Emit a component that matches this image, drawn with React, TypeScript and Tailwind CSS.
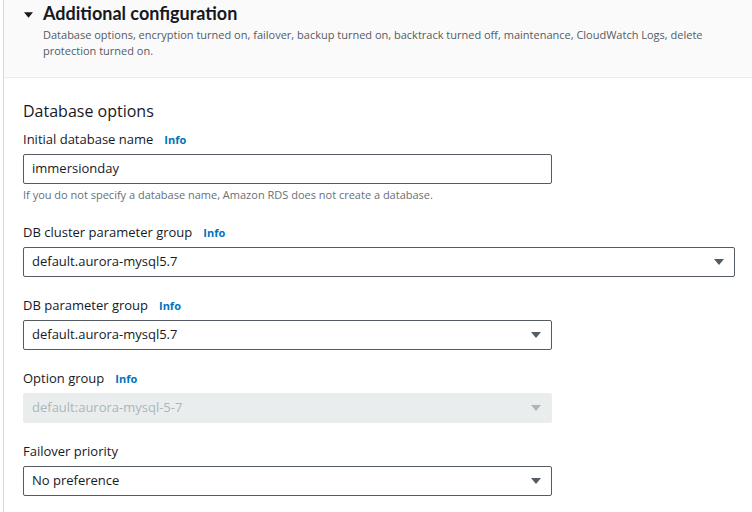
const fields = [
  { label: "DB cluster parameter group", value: "default.aurora-mysql5.7", info: true, wide: true },
  { label: "DB parameter group", value: "default.aurora-mysql5.7", info: true },
  { label: "Option group", value: "default:aurora-mysql-5-7", info: true, disabled: true },
  { label: "Failover priority", value: "No preference" },
];

function Caret({ className }: { className: string }) {
  return (
    <svg viewBox="0 0 10 6" className={className} fill="currentColor">
      <path d="M0 0h10L5 6z" />
    </svg>
  );
}

function Label({ text, info }: { text: string; info?: boolean }) {
  return (
    <div className="flex items-baseline h-[20px] mb-[5px] text-[13px] leading-[20px] text-[#16191f]">
      <span>{text}</span>
      {info && <span className="ml-[11px] text-[11px] font-bold text-[#0073bb]">Info</span>}
    </div>
  );
}

function Select({ value, wide, disabled }: { value: string; wide?: boolean; disabled?: boolean }) {
  return (
    <div
      className={`flex items-center justify-between h-[30px] pl-[8px] pr-[10px] rounded-[2px] text-[13px] ${
        wide ? "w-[712px]" : "w-[529px]"
      } ${
        disabled
          ? "bg-[#eaeded] border border-[#eaeded] text-[#aab7b8]"
          : "bg-white border border-[#545b64] text-[#16191f]"
      }`}
    >
      <span>{value}</span>
      <Caret className={`w-[10px] h-[6px] ${disabled ? "text-[#aab7b8]" : "text-[#545b64]"}`} />
    </div>
  );
}

export default function App() {
  return (
    <div className="min-h-screen bg-white pl-[3px] font-['Open_Sans',sans-serif]">
      <div className="min-h-screen border-l border-[#d5dbdb]">
        {/* Expandable section header */}
        <div className="bg-[#fafafa] border-b border-[#eaeded] pt-[2px] pb-[18px] pl-[19px] pr-[20px]">
          <div className="flex items-center h-[22px]">
            <Caret className="w-[9px] h-[6px] text-[#16191f] ml-[1px] mr-[10px] mt-[3px]" />
            <h2 className="font-['Lato',sans-serif] text-[18px] leading-[22px] font-bold text-[#16191f]">
              Additional configuration
            </h2>
          </div>
          <p className="mt-[3px] pl-[20px] text-[11px] leading-[16px] text-[#545b64]">
            Database options, encryption turned on, failover, backup turned on, backtrack turned off, maintenance,
            CloudWatch Logs, delete protection turned on.
          </p>
        </div>

        <div className="pl-[19px] pt-[23px]">
          <h3 className="text-[16px] leading-[20px] text-[#16191f] mb-[8px]">Database options</h3>

          <div className="mb-[19px]">
            <Label text="Initial database name" info />
            <div className="flex items-center w-[529px] h-[30px] pl-[8px] border border-[#545b64] rounded-[2px] text-[13px] text-[#16191f]">
              immersionday
            </div>
            <p className="mt-[3px] text-[11px] leading-[16px] text-[#687078]">
              If you do not specify a database name, Amazon RDS does not create a database.
            </p>
          </div>

          <div className="flex flex-col gap-[18px]">
            {fields.map((f) => (
              <div key={f.label}>
                <Label text={f.label} info={f.info} />
                <Select value={f.value} wide={f.wide} disabled={f.disabled} />
              </div>
            ))}
          </div>
        </div>
      </div>
    </div>
  );
}
